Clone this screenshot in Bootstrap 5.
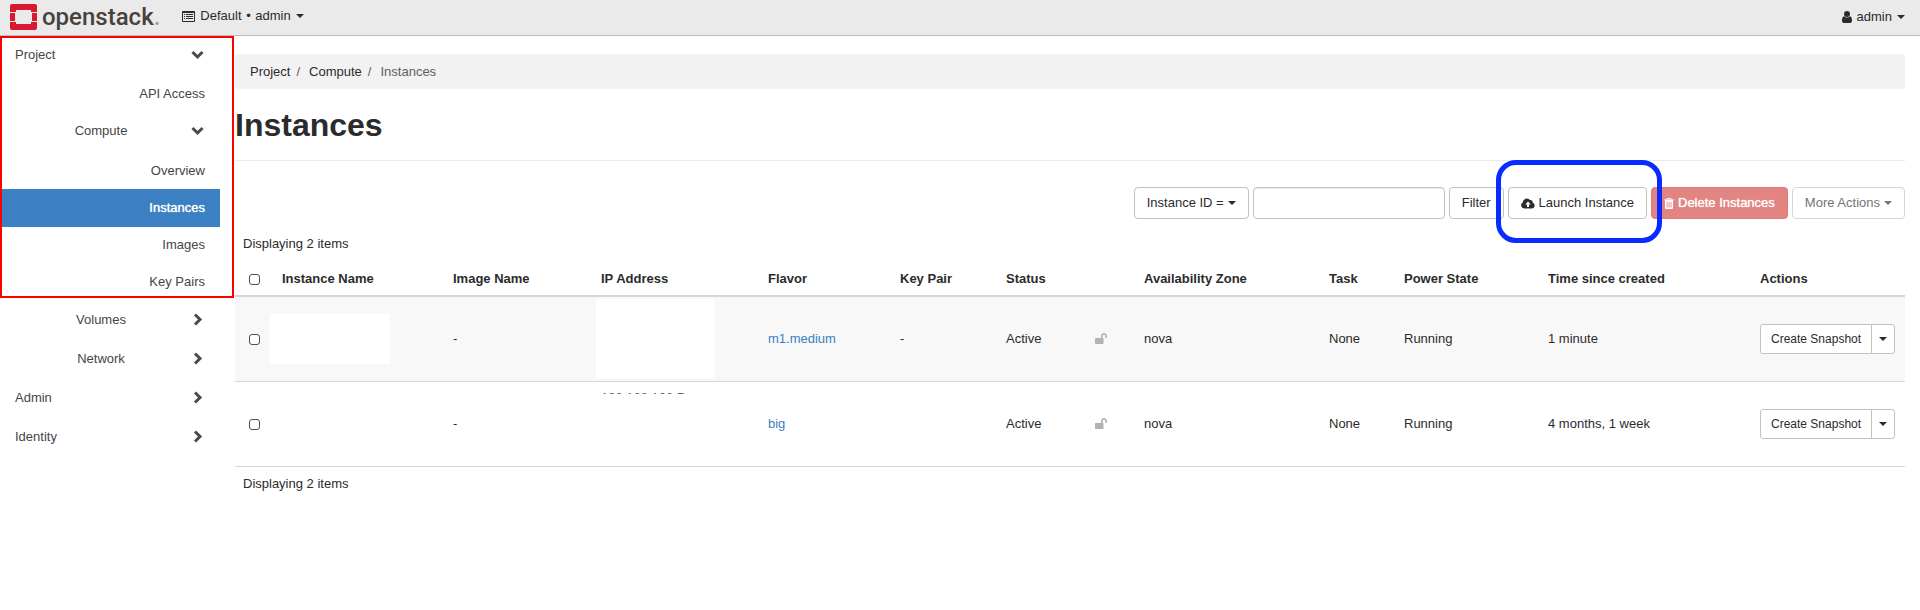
<!DOCTYPE html>
<html lang="en">
<head>
<meta charset="utf-8">
<meta name="viewport" content="width=device-width, initial-scale=1">
<title>Instances - OpenStack Dashboard</title>
<link href="https://cdn.jsdelivr.net/npm/bootstrap@5.3.0/dist/css/bootstrap.min.css" rel="stylesheet">
<style>
  body { font-family: "Liberation Sans", Arial, sans-serif; font-size: 13px; line-height: 18px; color: #2b2b2b; background: #fff; }
  a { text-decoration: none; }
  svg { display: block; flex: none; }

  .topbar { height: 36px; padding: 0 15px 0 10px; background: #eaeaea; border-bottom: 1px solid #bdbdbd; }
  .topbar > * { padding-bottom: 2px; }
  .brand-link { gap: 5px; margin-right: 22px; color: #48423c; font: 500 24px/26px Roboto, sans-serif; }
  .brand-link .dot { color: #a09c98; }
  .topbar .menu-btn { gap: 5px; padding: 0 0 1px; border: 0; background: none; color: #2b2b2b; }
  .bullet { margin: 0 1px; }
  .caret { width: 0; height: 0; border: 4px solid transparent; border-top-color: currentColor; border-bottom: 0; display: inline-block; vertical-align: middle; }

  .side-nav { width: 220px; flex: none; position: relative; }
  .side-nav button { width: 100%; height: 39px; gap: 4px; padding: 0 16px 2px 15px; border: 0; background: none; color: #454545; text-align: left; }
  .side-nav .leaf { height: 37px; padding: 0 15px; color: #454545; }
  .side-nav .leaf.current { height: 38px; background: #3a80c2; color: #fff; text-shadow: 0 0 1px #fff; }
  .side-nav .current ~ .leaf { padding-bottom: 2px; }
  .nested { padding-top: 1px; }
  .frame-red { position: absolute; inset: 0 -14px auto 0; height: 262px; border: 2px solid #f00; pointer-events: none; }

  .page-main { min-width: 0; padding: 18px 15px 0; }
  .crumbs { padding: 0 15px; height: 35px; background: #f2f2f2; border-radius: 4px; gap: 5px; color: #606060; }
  .crumbs a { color: #2b2b2b; }
  .crumbs a::after { content: "/"; color: #606060; padding: 0 4px 0 6px; }
  .page-head { padding: 18px 0 17px; border-bottom: 1px solid #eaeaea; }
  .page-head h1 { margin: 0; font-size: 32px; line-height: 36px; font-weight: 700; }

  .tools { gap: 4px; padding: 26px 0 8px; }
  .tools .btn, .tools input { height: 32px; font-size: 13px; line-height: 18px; border: 1px solid #c2c2c2; border-radius: 4px; }
  .tools .btn { padding: 0 12px; gap: 4px; color: #2b2b2b; background: #fff; }
  .tools input { width: 192px; box-shadow: inset 0 1px 1px rgba(0,0,0,.08); }
  .tools .btn.del { background: #e28481; border-color: #df7a77; color: #fff; text-shadow: 0 0 1px #fff; opacity: 1; }
  .tools .btn.more { color: #757575; border-color: #d5d5d5; opacity: 1; }
  .frame-blue { position: absolute; inset: -27px -15px -24px -12px; border: 5px solid #0a2bff; border-radius: 20px; z-index: 2; pointer-events: none; }

  .count { padding: 8px; line-height: 18px; }
  .inst { width: 100%; table-layout: fixed; border-collapse: separate; border-spacing: 0; }
  .inst th { height: 36px; padding: 2px 8px 0; border-bottom: 2px solid #d6d6d6; white-space: nowrap; }
  .inst td { height: 85px; padding: 0 8px; border-bottom: 1px solid #d6d6d6; vertical-align: middle; white-space: nowrap; }
  .inst tbody tr:first-child td { background: #f8f8f8; }
  .inst td a { color: #3a80c2; }
  .inst td svg { margin-bottom: 2px; }
  .inst th:first-child, .inst td:first-child { padding-left: 14px; }
  .inst input { appearance: none; display: block; width: 11px; height: 11px; margin: 0; border: 1px solid #505050; border-radius: 3px; background: #fff; }
  .inst .masked-name { width: 120px; height: 50px; margin-left: -12px; background: #fff; }
  .inst .masked-ip { width: 118px; height: 79px; margin: 0 0 2px -5px; background: #fff; }
  .inst .clipped { vertical-align: top; padding-top: 8px; }
  .clipped div { height: 4px; overflow: hidden; color: #666; line-height: 16px; }
  .snap .btn { height: 30px; padding: 0 10px; border: 1px solid #c2c2c2; border-radius: 3px; background: #fff; color: #2b2b2b; font-size: 12px; line-height: 18px; }
  .snap .btn + .btn { padding: 0 7px; }
</style>
</head>
<body>
<header class="topbar d-flex align-items-center justify-content-between">
  <div class="d-flex align-items-center">
    <a class="brand-link d-flex align-items-center" href="#">
      <svg width="27" height="26" viewBox="0 0 27 26" fill="#d9192e"><path d="M2 0h23a2 2 0 0 1 2 2v6h-6V6H6v2H0V2a2 2 0 0 1 2-2zM0 9h5v8H0zM22 9h5v8h-5zM0 18h6v2h15v-2h6v6a2 2 0 0 1-2 2H2a2 2 0 0 1-2-2z"/></svg>
      <span>openstack<span class="dot">.</span></span>
    </a>
    <button class="menu-btn d-flex align-items-center" type="button">
      <svg width="13" height="11" viewBox="0 0 13 11"><path fill="#2b2b2b" fill-rule="evenodd" d="M1 0h11a1 1 0 0 1 1 1v9a1 1 0 0 1-1 1H1a1 1 0 0 1-1-1V1a1 1 0 0 1 1-1zm0 2v8h11V2zM2 3h1v1H2zM4 3h7v1H4zM2 5h1v1H2zM4 5h7v1H4zM2 7h1v1H2zM4 7h7v1H4z"/></svg>
      <span>Default <span class="bullet">•</span> admin</span><span class="caret"></span>
    </button>
  </div>
  <button class="menu-btn d-flex align-items-center" type="button">
    <svg width="10" height="12" viewBox="0 0 10 12" fill="#2b2b2b"><circle cx="5" cy="3" r="3"/><path d="M2 5.300c1.800 1.600 4.200 1.600 6 0 1.500.3 2 2 2 4.200C10 11 9.300 12 8.200 12H1.800C.7 12 0 11 0 9.500c0-2.200.5-3.900 2-4.200z"/></svg>
    <span>admin</span><span class="caret"></span>
  </button>
</header>

<svg class="d-none" aria-hidden="true">
  <symbol id="chev" viewBox="0 0 13 13"><path d="M1.500 4l5 5 5-5" fill="none" stroke="#4a4a4a" stroke-width="3"/></symbol>
  <symbol id="chevr" viewBox="0 0 13 13"><path d="M4 1.500l5 5-5 5" fill="none" stroke="#4a4a4a" stroke-width="3"/></symbol>
  <symbol id="unlock" viewBox="0 0 12 11"><path fill="#b2b2b2" d="M.7 5H6V3.200C6 1.400 7.300 0 9 0s3 1.400 3 3.200v1.300a.5.5 0 0 1-.5.500h-.7a.5.5 0 0 1-.5-.5V3.200C10.300 2.300 9.800 1.700 9 1.700s-1.300.6-1.300 1.500V5h.1c.4 0 .7.3.7.7v4.600c0 .4-.3.7-.7.7H.7c-.4 0-.7-.3-.7-.7V5.700C0 5.300.3 5 .7 5z"/></symbol>
</svg>

<div class="d-flex">
  <nav class="side-nav" aria-label="Panels">
    <button class="d-flex align-items-center" type="button"><span class="flex-fill">Project</span><svg width="13" height="13"><use href="#chev"/></svg></button>
    <a class="leaf d-flex align-items-center justify-content-end" href="#">API Access</a>
    <button class="d-flex align-items-center" type="button"><span class="flex-fill text-center">Compute</span><svg width="13" height="13"><use href="#chev"/></svg></button>
    <div class="nested">
      <a class="leaf d-flex align-items-center justify-content-end" href="#">Overview</a>
      <a class="leaf current d-flex align-items-center justify-content-end" href="#">Instances</a>
      <a class="leaf d-flex align-items-center justify-content-end" href="#">Images</a>
      <a class="leaf d-flex align-items-center justify-content-end" href="#">Key Pairs</a>
    </div>
    <button class="d-flex align-items-center" type="button"><span class="flex-fill text-center">Volumes</span><svg width="13" height="13"><use href="#chevr"/></svg></button>
    <button class="d-flex align-items-center" type="button"><span class="flex-fill text-center">Network</span><svg width="13" height="13"><use href="#chevr"/></svg></button>
    <button class="d-flex align-items-center" type="button"><span class="flex-fill">Admin</span><svg width="13" height="13"><use href="#chevr"/></svg></button>
    <button class="d-flex align-items-center" type="button"><span class="flex-fill">Identity</span><svg width="13" height="13"><use href="#chevr"/></svg></button>
    <div class="frame-red"></div>
  </nav>

  <main class="page-main flex-fill">
    <nav class="crumbs d-flex align-items-center" aria-label="Breadcrumb"><a href="#">Project</a><a href="#">Compute</a><span>Instances</span></nav>
    <div class="page-head"><h1>Instances</h1></div>

    <div class="tools d-flex justify-content-end">
      <button class="btn d-flex align-items-center" type="button">Instance ID = <span class="caret"></span></button>
      <input type="text" class="px-2" aria-label="Filter value">
      <button class="btn" type="button">Filter</button>
      <div class="position-relative">
        <button class="btn d-flex align-items-center" type="button">
          <svg width="14" height="11" viewBox="0 0 14 11"><path fill="#2b2b2b" fill-rule="evenodd" d="M3.200 10.500A3.200 3.200 0 0 1 1.800 4.500 4 4 0 0 1 9 2.100a2.300 2.300 0 0 1 2.700 2.600A3 3 0 0 1 11 10.500zM7 3.500L4.200 6.500H6V9h2V6.500h1.800z"/></svg>
          Launch Instance</button>
        <div class="frame-blue"></div>
      </div>
      <button class="btn del d-flex align-items-center" type="button" disabled>
        <svg width="10" height="11" viewBox="0 0 10 11"><path fill="#fff" fill-rule="evenodd" d="M3 0h4l.6 1.500H10v1H9V10a1 1 0 0 1-1 1H2a1 1 0 0 1-1-1V2.500H0v-1h2.400zM3.600.8l-.3.700h3.400L6.400.8zM2.600 4v5.500h.9V4zM4.600 4v5.500h.9V4zM6.600 4v5.500h.9V4z"/></svg>
        Delete Instances</button>
      <button class="btn more d-flex align-items-center" type="button" disabled>More Actions <span class="caret"></span></button>
    </div>

    <div class="count">Displaying 2 items</div>
    <table class="inst">
      <colgroup>
        <col style="width:39px"><col style="width:171px"><col style="width:148px"><col style="width:167px"><col style="width:132px"><col style="width:106px"><col style="width:89px"><col style="width:49px"><col style="width:185px"><col style="width:75px"><col style="width:144px"><col style="width:212px"><col style="width:153px">
      </colgroup>
      <thead>
        <tr><th><input type="checkbox" aria-label="Select all"></th><th>Instance Name</th><th>Image Name</th><th>IP Address</th><th>Flavor</th><th>Key Pair</th><th>Status</th><th></th><th>Availability Zone</th><th>Task</th><th>Power State</th><th>Time since created</th><th>Actions</th></tr>
      </thead>
      <tbody>
        <tr><td><input type="checkbox" aria-label="Select instance 1"></td><td><div class="masked-name"></div></td><td>-</td><td><div class="masked-ip"></div></td><td><a href="#">m1.medium</a></td><td>-</td><td>Active</td><td><svg width="12" height="11"><use href="#unlock"/></svg></td><td>nova</td><td>None</td><td>Running</td><td>1 minute</td>
          <td><div class="snap btn-group"><button class="btn" type="button">Create Snapshot</button><button class="btn d-flex align-items-center" type="button" aria-label="More"><span class="caret"></span></button></div></td></tr>
        <tr><td><input type="checkbox" aria-label="Select instance 2"></td><td></td><td>-</td><td class="clipped"><div>192.168.100.7</div></td><td><a href="#">big</a></td><td></td><td>Active</td><td><svg width="12" height="11"><use href="#unlock"/></svg></td><td>nova</td><td>None</td><td>Running</td><td>4 months, 1 week</td>
          <td><div class="snap btn-group"><button class="btn" type="button">Create Snapshot</button><button class="btn d-flex align-items-center" type="button" aria-label="More"><span class="caret"></span></button></div></td></tr>
      </tbody>
    </table>
    <div class="count">Displaying 2 items</div>
  </main>
</div>
<script src="https://cdn.jsdelivr.net/npm/bootstrap@5.3.0/dist/js/bootstrap.bundle.min.js"></script>
</body>
</html>
